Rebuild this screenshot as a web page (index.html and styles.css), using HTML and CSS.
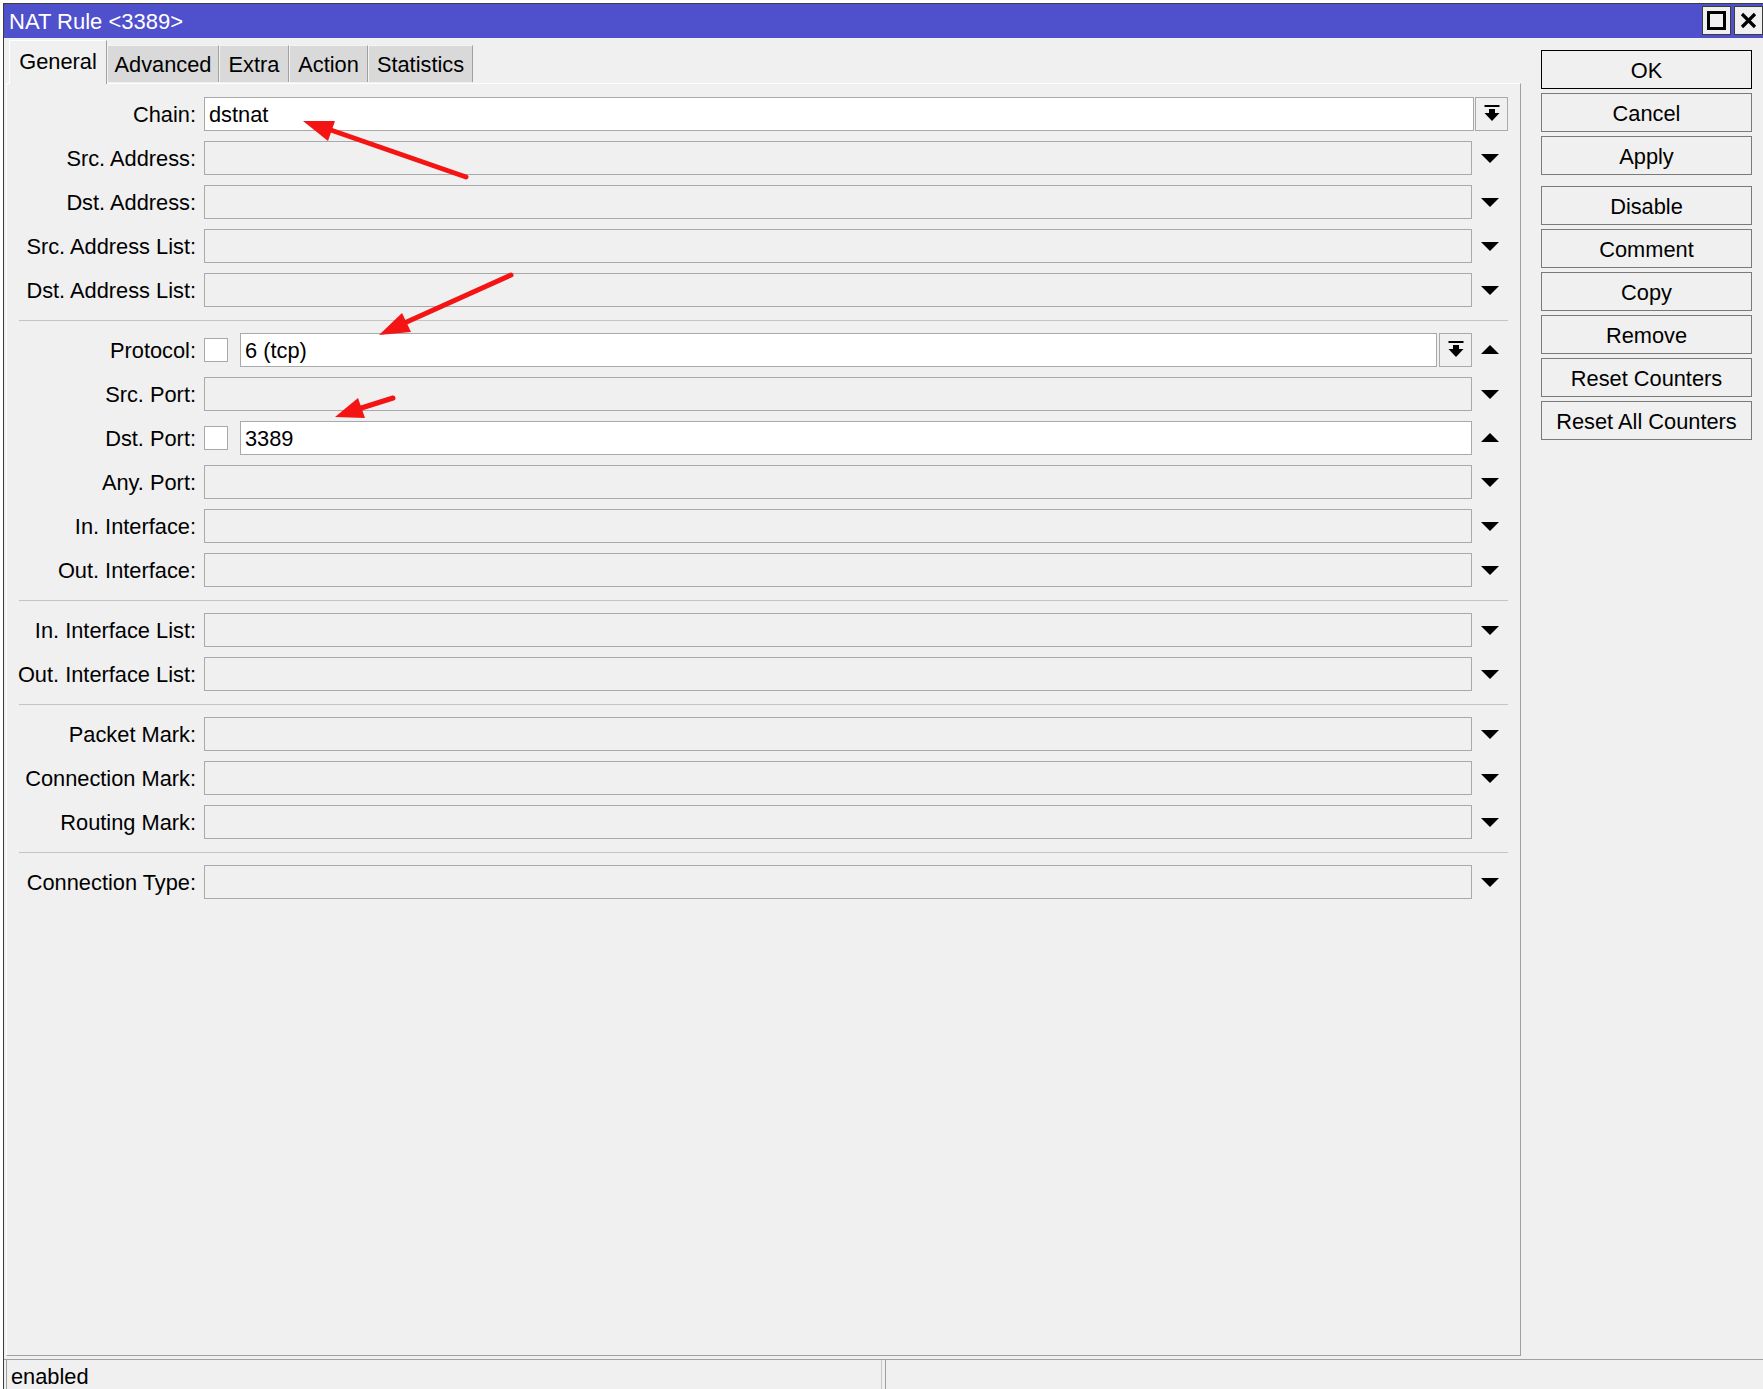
FILE: index.html
```html
<!DOCTYPE html>
<html>
<head>
<meta charset="utf-8">
<title>NAT Rule &lt;3389&gt;</title>
<link rel="stylesheet" href="styles.css">
</head>
<body>
<div class="behind"></div>
<div class="window">
  <div class="titlebar">
    <span class="title">NAT Rule &lt;3389&gt;</span>
    <div class="tbtns">
      <div class="tbtn"><svg width="19" height="19" viewBox="0 0 19 19"><rect x="1.5" y="1.5" width="16" height="16" fill="none" stroke="#000" stroke-width="3"/></svg></div>
      <div class="tbtn"><svg width="17" height="17" viewBox="0 0 17 17"><path d="M2 2 L15 15 M15 2 L2 15" stroke="#000" stroke-width="3.2"/></svg></div>
    </div>
  </div>
  <div class="main">
    <div class="leftcol">
      <div class="tabs">
        <div class="tab active" style="width:98px">General</div>
        <div class="tab" style="width:112px">Advanced</div>
        <div class="tab" style="width:70px">Extra</div>
        <div class="tab" style="width:79px">Action</div>
        <div class="tab" style="width:105px">Statistics</div>
      </div>
      <div class="panel">
        <div class="row"><label>Chain:</label><div class="inp white">dstnat</div><div class="dbtn"><svg width="16" height="17" viewBox="0 0 16 17"><rect x="0.5" y="0" width="15" height="2" fill="#000"/><rect x="5" y="4" width="6" height="5" fill="#000"/><polygon points="0.5,8 15.5,8 8,16" fill="#000"/></svg></div></div>
        <div class="row"><label>Src. Address:</label><div class="inp"></div><div class="arr down"></div></div>
        <div class="row"><label>Dst. Address:</label><div class="inp"></div><div class="arr down"></div></div>
        <div class="row"><label>Src. Address List:</label><div class="inp"></div><div class="arr down"></div></div>
        <div class="row"><label>Dst. Address List:</label><div class="inp"></div><div class="arr down"></div></div>
        <div class="sep"></div>
        <div class="row"><label>Protocol:</label><div class="chk"></div><div class="inp white">6 (tcp)</div><div class="dbtn pbtn"><svg width="16" height="17" viewBox="0 0 16 17"><rect x="0.5" y="0" width="15" height="2" fill="#000"/><rect x="5" y="4" width="6" height="5" fill="#000"/><polygon points="0.5,8 15.5,8 8,16" fill="#000"/></svg></div><div class="arr up"></div></div>
        <div class="row"><label>Src. Port:</label><div class="inp"></div><div class="arr down"></div></div>
        <div class="row"><label>Dst. Port:</label><div class="chk"></div><div class="inp white">3389</div><div class="arr up"></div></div>
        <div class="row"><label>Any. Port:</label><div class="inp"></div><div class="arr down"></div></div>
        <div class="row"><label>In. Interface:</label><div class="inp"></div><div class="arr down"></div></div>
        <div class="row"><label>Out. Interface:</label><div class="inp"></div><div class="arr down"></div></div>
        <div class="sep"></div>
        <div class="row"><label>In. Interface List:</label><div class="inp"></div><div class="arr down"></div></div>
        <div class="row"><label>Out. Interface List:</label><div class="inp"></div><div class="arr down"></div></div>
        <div class="sep"></div>
        <div class="row"><label>Packet Mark:</label><div class="inp"></div><div class="arr down"></div></div>
        <div class="row"><label>Connection Mark:</label><div class="inp"></div><div class="arr down"></div></div>
        <div class="row"><label>Routing Mark:</label><div class="inp"></div><div class="arr down"></div></div>
        <div class="sep"></div>
        <div class="row"><label>Connection Type:</label><div class="inp"></div><div class="arr down"></div></div>
      </div>
    </div>
    <div class="rightcol">
      <div class="btn default">OK</div>
      <div class="btn">Cancel</div>
      <div class="btn">Apply</div>
      <div class="btn gap">Disable</div>
      <div class="btn">Comment</div>
      <div class="btn">Copy</div>
      <div class="btn">Remove</div>
      <div class="btn">Reset Counters</div>
      <div class="btn">Reset All Counters</div>
    </div>
  </div>
  <div class="status">
    <div class="sfield left">enabled</div>
    <div class="sfield right"></div>
  </div>
</div>
<svg class="annot" width="1763" height="1389" viewBox="0 0 1763 1389">
  <g stroke="#f41414" stroke-width="5" stroke-linecap="round" fill="#f41414">
    <line x1="466" y1="177" x2="325" y2="128"/>
    <line x1="511" y1="275" x2="400" y2="325"/>
    <line x1="393" y1="398" x2="355" y2="410"/>
  </g>
  <g fill="#f41414">
    <polygon points="303,121 335,121 328,141"/>
    <polygon points="379,335 411,332 402,313"/>
    <polygon points="335,417 365,418 358,398"/>
  </g>
</svg>
</body>
</html>
```

FILE: styles.css
```css
html, body {
  margin: 0;
  padding: 0;
  width: 1763px;
  height: 1389px;
  overflow: hidden;
  background: #ffffff;
  font-family: "Liberation Sans", Arial, sans-serif;
  font-size: 21.8px;
  color: #000;
}

.behind {
  position: absolute;
  left: 0;
  top: 0;
  width: 1763px;
  height: 3px;
  background: #fff;
}

.window {
  position: relative;
  margin: 3px 0 0 3px;
  width: 1759px;
  height: 1385px;
  border-left: 1px solid #3c3c3c;
  border-top: 1px solid #3c3c3c;
  background: #f0f0f0;
  display: flex;
  flex-direction: column;
}

.titlebar {
  height: 34px;
  background: #4f50cc;
  color: #fff;
  display: flex;
  align-items: center;
  justify-content: space-between;
  flex-shrink: 0;
}

.title {
  padding-left: 5px;
  padding-top: 2px;
  font-size: 22px;
  line-height: 32px;
}

.tbtns {
  display: flex;
  gap: 3px;
  align-self: flex-start;
  margin-top: 2px;
}

.tbtn {
  width: 27px;
  height: 27px;
  background: #f0f0f0;
  border: 1px solid #3c3c3c;
  display: flex;
  align-items: center;
  justify-content: center;
}

.main {
  display: flex;
  flex: 1;
  min-height: 0;
}

.leftcol {
  display: flex;
  flex-direction: column;
  margin-left: 2px;
  width: 1515px;
}

.tabs {
  height: 45px;
  display: flex;
  align-items: flex-end;
  padding-left: 3px;
  position: relative;
  z-index: 2;
}

.tab {
  height: 37px;
  background: #d9d9d9;
  border-top: 1px solid #f4f4f4;
  border-left: 1px solid #f4f4f4;
  border-right: 1px solid #a0a0a0;
  box-sizing: border-box;
  display: flex;
  align-items: center;
  justify-content: center;
  padding-top: 3px;
  margin-bottom: 1px;
}

.tab.active {
  height: 44px;
  background: #f0f0f0;
  border-top: 1px solid #ffffff;
  border-left: 1px solid #ffffff;
  margin-bottom: -1px;
  padding-top: 0;
  padding-bottom: 0;
}

.panel {
  height: 1275px;
  box-sizing: border-box;
  border-top: 1px solid #ffffff;
  border-left: 1px solid #ffffff;
  border-right: 1px solid #a0a0a0;
  border-bottom: 1px solid #a0a0a0;
  padding: 13px 12px 0 0;
  display: flex;
  flex-direction: column;
}

.row {
  display: flex;
  align-items: center;
  height: 34px;
  margin-bottom: 10px;
}

.row label {
  width: 189px;
  text-align: right;
  margin-right: 8px;
  white-space: nowrap;
  padding-top: 2px;
}

.inp {
  flex: 1;
  height: 34px;
  box-sizing: border-box;
  border: 1px solid #a9a9a9;
  background: #f0f0f0;
  line-height: 34px;
  padding-left: 4px;
  white-space: nowrap;
}

.inp.white {
  background: #ffffff;
}

.dbtn {
  width: 33px;
  height: 34px;
  box-sizing: border-box;
  border: 1px solid #a9a9a9;
  background: #f0f0f0;
  margin-left: 1px;
  display: flex;
  align-items: center;
  justify-content: center;
}

.pbtn {
  margin-left: 2px;
}

.chk {
  width: 24px;
  height: 24px;
  box-sizing: border-box;
  border: 1px solid #a9a9a9;
  background: #fff;
  margin-right: 12px;
}

.arr {
  width: 36px;
  height: 34px;
  position: relative;
}

.arr::after {
  content: "";
  position: absolute;
  left: 9px;
  width: 0;
  height: 0;
  border-left: 9.5px solid transparent;
  border-right: 9.5px solid transparent;
}

.arr.down::after {
  top: 13px;
  border-top: 9px solid #000;
}

.arr.up::after {
  top: 12px;
  border-bottom: 9px solid #000;
}

.sep {
  height: 1px;
  background: #c4c4c4;
  margin: 3px 0 12px 12px;
}

.rightcol {
  display: flex;
  flex-direction: column;
  margin-left: 20px;
  padding-top: 12px;
  width: 211px;
}

.btn {
  height: 39px;
  box-sizing: border-box;
  border: 1px solid #7a7a7a;
  background: #f0f0f0;
  display: flex;
  align-items: center;
  justify-content: center;
  margin-bottom: 4px;
  padding-top: 2px;
}

.btn.default {
  border: 1px solid #000;
}

.btn.gap {
  margin-top: 7px;
}

.status {
  height: 29px;
  display: flex;
  margin-top: 3px;
  border-top: 1px solid #a0a0a0;
  flex-shrink: 0;
}

.sfield {
  height: 100%;
  box-sizing: border-box;
}

.sfield.left {
  width: 876px;
  margin-left: 2px;
  border-left: 1px solid #a0a0a0;
  border-right: 1px solid #c8c8c8;
  padding-left: 4px;
  line-height: 34px;
}

.sfield.right {
  flex: 1;
  margin-left: 3px;
  border-left: 1px solid #a0a0a0;
}

.annot {
  position: absolute;
  left: 0;
  top: 0;
  pointer-events: none;
}
```
